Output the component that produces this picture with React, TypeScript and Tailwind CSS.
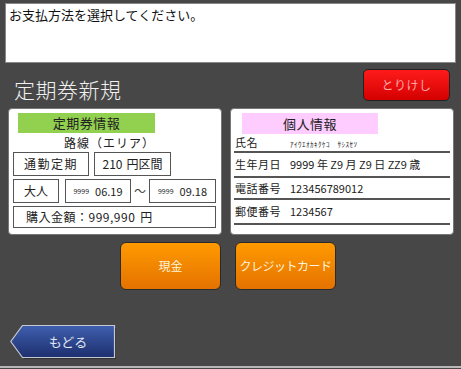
import React from 'react';

const jp = { fontFamily: '"Noto Sans CJK JP", "Noto Sans", sans-serif' };

const Box = ({ className = '', children }: { className?: string; children: React.ReactNode }) => (
  <div className={`flex items-center border-[1.5px] border-[#555] bg-white text-[12px] text-[#222] ${className}`}>
    {children}
  </div>
);

const InfoRow = ({ label, h, children }: { label: string; h: string; children: React.ReactNode }) => (
  <div className={`flex items-center border-b-2 border-[#555] ${h}`}>
    <span className="w-[56px] pl-[1px] text-[11px] tracking-[0.5px] text-[#222]">{label}</span>
    <span className="text-[11px] text-[#222]">{children}</span>
  </div>
);

const App = () => {
  return (
    <div className="relative flex h-[369px] w-[461px] flex-col overflow-hidden bg-[#474747]" style={jp}>
      {/* message */}
      <div className="mx-[5px] mt-[3px] h-[60px] border border-[#888] bg-white px-[3px] pt-[3px] text-[13px] leading-[16px] text-[#111]">
        お支払方法を選択してください。
      </div>

      {/* title row */}
      <div className="flex h-[45px] items-start justify-between pl-[14px] pr-[11px]">
        <h1 className="mt-[13px] text-[21px] font-light leading-[26px] tracking-[0.5px] text-[#f0f0f0]">定期券新規</h1>
        <button className="mt-[6px] flex h-[32px] w-[87px] items-center justify-center rounded-[5px] border border-[#222] bg-gradient-to-b from-[#ff1a1a] to-[#d40000] text-[12px] tracking-[0.5px] text-[#ffa6a6]">
          とりけし
        </button>
      </div>

      {/* cards */}
      <div className="flex h-[127px] gap-[8px] pl-[8px]">
        <div className="flex w-[214px] flex-col rounded-[4px] border border-[#777] bg-white px-[4px] pt-[4px]">
          <div className="ml-[5px] flex h-[20px] w-[137px] items-center justify-center bg-[#92d050] text-[13px] tracking-[0.5px] text-[#222]">
            定期券情報
          </div>
          <div className="flex h-[19px] items-center pl-[51px] text-[12px] tracking-[1px] text-[#222]">路線（エリア）</div>
          <div className="flex gap-[5px]">
            <Box className="h-[24px] w-[76px] justify-center tracking-[1.5px]">通勤定期</Box>
            <Box className="h-[24px] w-[77px] justify-center gap-[4px]">
              <span>210</span>
              <span>円区間</span>
            </Box>
          </div>
          <div className="mt-[3px] flex items-center">
            <Box className="h-[24px] w-[46px] justify-center">大人</Box>
            <Box className="ml-[6px] h-[24px] w-[66px] justify-center gap-[6px]">
              <span className="text-[7px]">9999</span>
              <span className="text-[11px]">06.19</span>
            </Box>
            <span className="w-[18px] text-center text-[12px] text-[#444]">～</span>
            <Box className="h-[24px] w-[67px] justify-center gap-[6px]">
              <span className="text-[7px]">9999</span>
              <span className="text-[11px]">09.18</span>
            </Box>
          </div>
          <Box className="mt-[3px] h-[22px] w-[203px] gap-[5px] pl-[12px] tracking-[0.5px]">
            <span>購入金額：999,990</span>
            <span>円</span>
          </Box>
        </div>

        <div className="flex w-[224px] flex-col rounded-[4px] border border-[#777] bg-white px-[3px] pt-[4px]">
          <div className="ml-[8px] flex h-[21px] w-[136px] items-center justify-center bg-[#ffccff] text-[13px] tracking-[0.5px] text-[#222]">
            個人情報
          </div>
          <InfoRow label="氏名" h="h-[19px]">
            <span className="text-[7px] tracking-[0.5px]">ｱｲｳｴｵｶｷｸｹｺ　ｻｼｽｾｿ</span>
          </InfoRow>
          <InfoRow label="生年月日" h="h-[25px]">
            9999 年 Z9 月 Z9 日 ZZ9 歳
          </InfoRow>
          <InfoRow label="電話番号" h="h-[22px]">
            123456789012
          </InfoRow>
          <InfoRow label="郵便番号" h="h-[25px]">
            1234567
          </InfoRow>
        </div>
      </div>

      {/* payment buttons */}
      <div className="mt-[7px] flex h-[48px] gap-[14px] pl-[120px]">
        <button className="flex h-[48px] w-[101px] items-center justify-center rounded-[6px] border border-[#2a2a2a] bg-gradient-to-b from-[#ff9a00] to-[#e47200] text-[12px] text-[#fff3dc]">
          現金
        </button>
        <button className="flex h-[48px] w-[101px] items-center justify-center rounded-[6px] border border-[#2a2a2a] bg-gradient-to-b from-[#ff9a00] to-[#e47200] text-[12px] tracking-[-0.5px] text-[#fff3dc]">
          クレジットカード
        </button>
      </div>

      {/* back button */}
      <div className="ml-[10px] mt-[35px] flex h-[34px] w-[106px]">
        <button className="relative flex h-[34px] w-[106px] items-center justify-center pl-[10px] text-[13px] text-[#e4e8f4]">
          <svg className="absolute inset-0" width="106" height="34" viewBox="0 0 106 34">
            <defs>
              <linearGradient id="bk" x1="0" y1="0" x2="0" y2="1">
                <stop offset="0" stopColor="#3f5fae" />
                <stop offset="1" stopColor="#1d2f6e" />
              </linearGradient>
            </defs>
            <polygon points="108,35 15,35 3,18 15,3 108,3" fill="#222" opacity="0.6" />
            <polygon points="104.5,0.5 12.5,0.5 0.8,16.5 12.5,32.5 104.5,32.5" fill="url(#bk)" stroke="#c6c9d2" strokeWidth="1.2" />
          </svg>
          <span className="relative">もどる</span>
        </button>
      </div>

      <div className="absolute bottom-[1px] left-0 h-[2px] w-full bg-[#b8b8b8]" />
    </div>
  );
};

export default App;
